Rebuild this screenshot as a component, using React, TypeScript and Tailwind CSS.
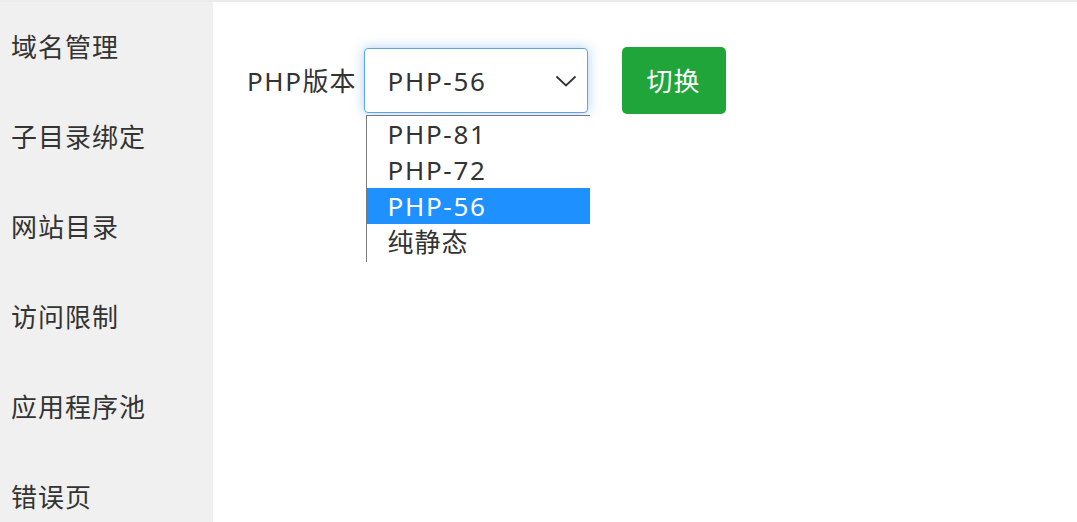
import React from "react";

const font = { fontFamily: '"Noto Sans", "Noto Sans CJK SC", sans-serif' };

export default function App() {
  const menu = ["域名管理", "子目录绑定", "网站目录", "访问限制", "应用程序池", "错误页"];
  const options = ["PHP-81", "PHP-72", "PHP-56", "纯静态"];
  return (
    <div
      className="w-[1077px] h-[522px] overflow-hidden bg-white border-t-2 border-[#ebebeb] flex text-[#333] text-[26px] tracking-[1px]"
      style={font}
    >
      <div className="w-[213px] shrink-0 bg-[#f0f0f0] flex flex-col">
        {menu.map((m) => (
          <div key={m} className="h-[90px] shrink-0 flex items-center pl-[11px] leading-none">
            {m}
          </div>
        ))}
      </div>
      <div className="flex-1 relative pl-[34px] pt-[45px]">
        <div className="flex items-center">
          <span className="leading-none mr-[7px]">
            <span className="tracking-[1.6px]">PHP</span>版本
          </span>
          <div className="relative">
            <div className="w-[224px] h-[65px] border-[1.5px] border-[#62a3e8] rounded-[4px] shadow-[0_0_12px_rgba(90,160,235,0.5)] bg-white flex items-center justify-between pl-[23px] pr-[10px]">
              <span className="leading-none tracking-[1.7px]">PHP-56</span>
              <svg width="22" height="12" viewBox="0 0 22 12" fill="none">
                <path d="M1.5 1.5 L11 10.5 L20.5 1.5" stroke="#333" strokeWidth="1.8" />
              </svg>
            </div>
            <div className="absolute left-[2px] top-[67px] w-[224px] h-[147px] overflow-hidden bg-white border-l border-t border-[#7a7a7a]">
              {options.map((o) => (
                <div
                  key={o}
                  className={
                    "h-[36px] flex items-center pl-[21px] leading-none " +
                    (o.startsWith("PHP") ? "tracking-[1.7px] " : "") +
                    (o === "PHP-56" ? "bg-[#1e90ff] text-white" : "")
                  }
                >
                  {o}
                </div>
              ))}
            </div>
          </div>
          <button className="ml-[34px] w-[104px] h-[67px] bg-[#20a53a] text-white rounded-[5px] flex items-center justify-center leading-none">
            切换
          </button>
        </div>
      </div>
    </div>
  );
}
